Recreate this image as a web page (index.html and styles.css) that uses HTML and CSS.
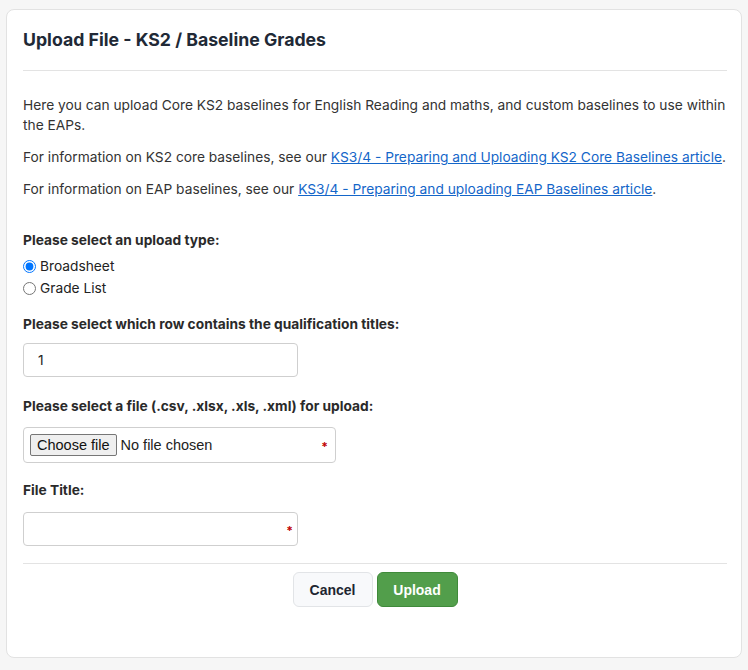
FILE: index.html
```html
<!DOCTYPE html>
<html>
<head>
<meta charset="utf-8">
<link rel="stylesheet" href="styles.css">
</head>
<body>
<div class="card">
  <h1 class="title">Upload File - KS2 / Baseline Grades</h1>
  <hr class="rule">
  <p class="para">Here you can upload Core KS2 baselines for English Reading and maths, and custom baselines to use within the EAPs.</p>
  <p class="para">For information on KS2 core baselines, see our <a href="#" class="link">KS3/4 - Preparing and Uploading KS2 Core Baselines article</a>.</p>
  <p class="para">For information on EAP baselines, see our <a href="#" class="link">KS3/4 - Preparing and uploading EAP Baselines article</a>.</p>

  <div class="group group-radios">
    <div class="label">Please select an upload type:</div>
    <label class="radio"><input type="radio" name="t" checked><span>Broadsheet</span></label>
    <label class="radio"><input type="radio" name="t"><span>Grade List</span></label>
  </div>

  <div class="group">
    <div class="label">Please select which row contains the qualification titles:</div>
    <input class="text-input" type="text" value="1">
  </div>

  <div class="group group-file">
    <div class="label">Please select a file (.csv, .xlsx, .xls, .xml) for upload:</div>
    <div class="file-box">
      <div class="file-input">
        <button class="file-btn" type="button">Choose file</button>
        <span class="file-name">No file chosen</span>
      </div>
      <span class="req">*</span>
    </div>
  </div>

  <div class="group">
    <div class="label">File Title:</div>
    <div class="title-box">
      <input class="text-input" type="text">
      <span class="req req-abs">*</span>
    </div>
  </div>

  <hr class="rule rule-bottom">
  <div class="actions">
    <button class="btn btn-cancel">Cancel</button>
    <button class="btn btn-upload">Upload</button>
  </div>
</div>
</body>
</html>
```

FILE: styles.css
```css
html, body {
  margin: 0;
  padding: 0;
  background: #f6f6f6;
}
body {
  padding: 9px 6px 13px 6px;
  font-family: Inter, "Noto Sans", sans-serif;
  font-size: 13.75px;
  line-height: 20px;
  color: #333;
}
.card {
  box-sizing: border-box;
  width: 736px;
  height: 649px;
  background: #fff;
  border: 1px solid #e2e2e2;
  border-radius: 8px;
  padding: 19px 14px 0 16px;
}
.title {
  margin: 0;
  font-size: 17.7px;
  line-height: 22px;
  font-weight: 700;
  color: #212936;
}
.rule {
  border: 0;
  border-top: 1px solid #e3e3e3;
  margin: 19px 0 0 0;
}
.para {
  margin: 12px 0 0 0;
}
.rule + .para {
  margin-top: 24px;
}
.link {
  color: #1466c9;
  text-decoration: underline;
}
.label {
  font-weight: 700;
  color: #2a2a2a;
}
.group {
  margin-top: 17px;
}
.group-radios {
  margin-top: 31px;
}
.group-radios .label {
  margin-bottom: 5px;
}
.radio {
  display: flex;
  align-items: center;
  height: 22px;
  color: #222;
}
.radio input {
  margin: 0 4px 0 0;
  width: 13px;
  height: 13px;
}
.group-radios + .group {
  margin-top: 15px;
}
.group-file {
  margin-top: 19px;
}
.group .label + .text-input {
  margin-top: 9px;
}
.group .label + .file-box {
  margin-top: 11px;
}
.group .label + .title-box {
  margin-top: 12px;
}
.text-input {
  display: block;
  box-sizing: border-box;
  width: 275px;
  height: 34px;
  border: 1px solid #cfcfcf;
  border-radius: 4px;
  padding: 0 14px;
  font-family: Inter, "Noto Sans", sans-serif;
  font-size: 13.75px;
  color: #222;
  outline: none;
}
.file-box {
  box-sizing: border-box;
  width: 313px;
  height: 36px;
  border: 1px solid #cfcfcf;
  border-radius: 4px;
  display: flex;
  align-items: center;
  justify-content: space-between;
  padding: 0 7px 0 6px;
}
.file-input {
  display: flex;
  align-items: center;
  font-family: "Liberation Sans", Arial, sans-serif;
  font-size: 14.5px;
  color: #222;
}
.file-btn {
  box-sizing: border-box;
  height: 22px;
  padding: 0 6px;
  margin: 0 4px 0 0;
  background: #efefef;
  border: 1px solid #767676;
  border-radius: 2px;
  font-family: "Liberation Sans", Arial, sans-serif;
  font-size: 14.5px;
  color: #111;
}
.req {
  color: #c00000;
  font-size: 12px;
  font-weight: 700;
  line-height: 12px;
  margin-top: 4px;
}
.title-box {
  position: relative;
  width: 275px;
}
.req-abs {
  position: absolute;
  right: 5px;
  top: 13px;
  margin: 0;
}
.rule-bottom {
  margin-top: 17px;
}
.actions {
  display: flex;
  justify-content: center;
  gap: 4px;
  margin-top: 8px;
}
.btn {
  box-sizing: border-box;
  height: 35px;
  border-radius: 6px;
  font-family: "Liberation Sans", Arial, sans-serif;
  font-size: 14px;
  font-weight: 700;
  cursor: pointer;
}
.btn-cancel {
  width: 80px;
  background: #f8f9fb;
  border: 1px solid #e2e4e7;
  color: #1e2530;
}
.btn-upload {
  width: 81px;
  background: #529e4b;
  border: 1px solid #3f8a3a;
  color: #fff;
}
```
